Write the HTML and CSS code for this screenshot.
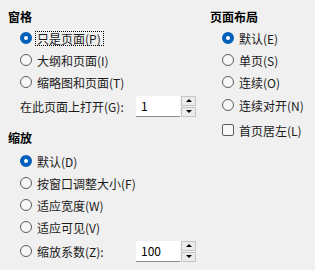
FILE: index.html
```html
<!DOCTYPE html>
<html lang="zh-CN">
<head>
    <meta charset="UTF-8">
    <title>视图选项</title>
    <link rel="stylesheet" href="styles.css">
</head>
<body>
    <div class="dialog">
        <!-- 左栏：窗格 + 缩放 -->
        <div class="col col-left">
            <div class="group-title">窗格</div>
            <div class="row"><span class="radio checked"></span><span class="focus">只是页面(P)</span></div>
            <div class="row"><span class="radio"></span><span>大纲和页面(I)</span></div>
            <div class="row"><span class="radio"></span><span>缩略图和页面(T)</span></div>
            <div class="row spin-row">
                <span class="spin-label">在此页面上打开(G):</span>
                <div class="spin">
                    <div class="spin-field">1</div>
                    <div class="spin-buttons">
                        <span class="spin-btn"><span class="arrow-up"></span></span>
                        <span class="spin-btn"><span class="arrow-down"></span></span>
                    </div>
                </div>
            </div>

            <div class="group-title second">缩放</div>
            <div class="row first"><span class="radio checked"></span><span>默认(D)</span></div>
            <div class="row"><span class="radio"></span><span>按窗口调整大小(F)</span></div>
            <div class="row"><span class="radio"></span><span>适应宽度(W)</span></div>
            <div class="row"><span class="radio"></span><span>适应可见(V)</span></div>
            <div class="row spin-row">
                <span class="spin-label"><span class="radio"></span><span>缩放系数(Z):</span></span>
                <div class="spin">
                    <div class="spin-field">100</div>
                    <div class="spin-buttons">
                        <span class="spin-btn"><span class="arrow-up"></span></span>
                        <span class="spin-btn"><span class="arrow-down"></span></span>
                    </div>
                </div>
            </div>
        </div>

        <!-- 右栏：页面布局 -->
        <div class="col col-right">
            <div class="group-title">页面布局</div>
            <div class="row"><span class="radio checked"></span><span>默认(E)</span></div>
            <div class="row"><span class="radio"></span><span>单页(S)</span></div>
            <div class="row"><span class="radio"></span><span>连续(O)</span></div>
            <div class="row spaced"><span class="radio"></span><span>连续对开(N)</span></div>
            <div class="row check-row"><span class="checkbox"></span><span>首页居左(L)</span></div>
        </div>
    </div>
</body>
</html>
```

FILE: styles.css
```css
body {
    margin: 0;
    background-color: #f0f0f0;
    font-family: "Noto Sans CJK SC", "Noto Sans", sans-serif;
    font-size: 12px;
    color: #1a1a1a;
}
.dialog {
    display: flex;
    padding: 7px 0 0 8px;
}
.col-left {
    width: 202px;
}
.group-title {
    height: 20px;
    line-height: 20px;
    font-weight: bold;
    color: #000;
}
.group-title.second {
    margin-top: 10px;
}
.row {
    display: flex;
    align-items: center;
    height: 22px;
    padding-left: 12px;
    white-space: nowrap;
}
.row.first {
    margin-top: 2px;
}
.spin-row {
    height: 24px;
    margin-top: 1px;
}
.row.spaced {
    margin-top: 1px;
}
.check-row {
    margin-top: 3px;
}
.radio {
    box-sizing: border-box;
    flex-shrink: 0;
    width: 12px;
    height: 12px;
    margin-right: 5px;
    border: 1px solid #5c5c5c;
    border-radius: 50%;
    background-color: #f7f7f7;
}
.radio.checked {
    border: 4px solid #005fb8;
    background-color: #fff;
}
.checkbox {
    box-sizing: border-box;
    flex-shrink: 0;
    width: 12px;
    height: 12px;
    margin-right: 5px;
    border: 1px solid #5c5c5c;
    border-radius: 2px;
    background-color: #f7f7f7;
}
.focus {
    line-height: 13px;
    margin-left: -1px;
    padding: 0 2px 0 1px;
    outline: 1px dotted #000;
    outline-offset: 0;
}
.spin-label {
    display: flex;
    align-items: center;
    width: 116px;
}
.spin {
    display: flex;
    height: 21px;
}
.spin-field {
    box-sizing: border-box;
    width: 44px;
    padding-left: 5px;
    line-height: 20px;
    background-color: #fff;
    border-bottom: 1px solid #8a8a8a;
    color: #000;
}
.spin-buttons {
    display: flex;
    flex-direction: column;
    gap: 1px;
    margin-left: 1px;
}
.spin-btn {
    box-sizing: border-box;
    display: flex;
    align-items: center;
    justify-content: center;
    width: 15px;
    height: 10px;
    background-color: #ebebeb;
    border: 1px solid #c6c6c6;
}
.arrow-up {
    border-left: 3px solid transparent;
    border-right: 3px solid transparent;
    border-bottom: 3px solid #000;
}
.arrow-down {
    border-left: 3px solid transparent;
    border-right: 3px solid transparent;
    border-top: 3px solid #000;
}
```
